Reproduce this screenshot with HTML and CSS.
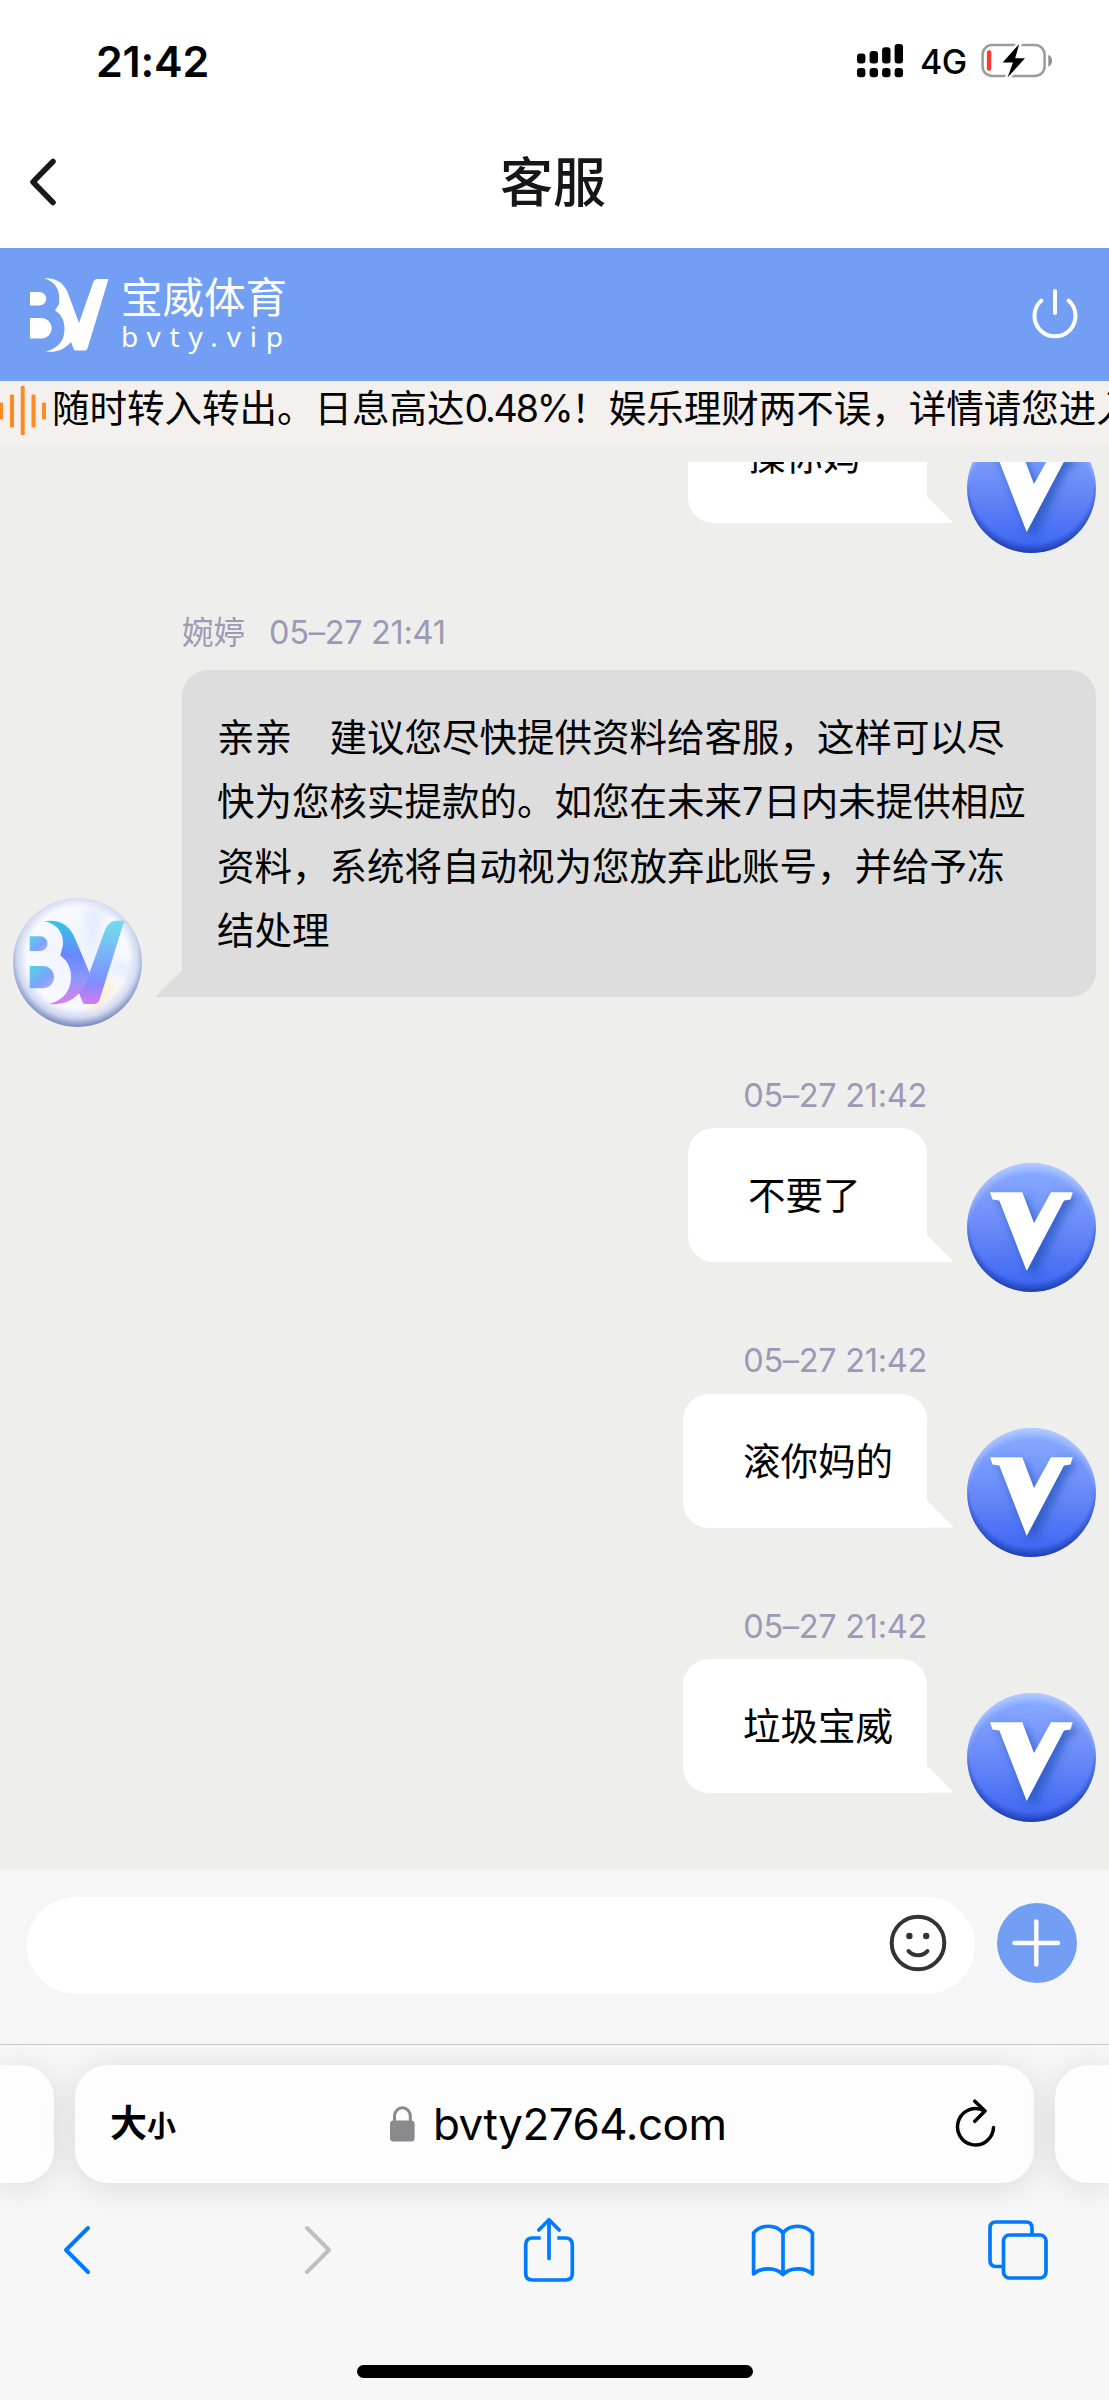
FILE: index.html
```
<!DOCTYPE html>
<html lang="zh-CN">
<head>
<meta charset="utf-8">
<title>客服</title>
<link rel="stylesheet" href="styles.css">
</head>
<body>
<svg class="defs" width="0" height="0" aria-hidden="true">
  <defs>
    <linearGradient id="vBall" x1="0" y1="0" x2="0" y2="1">
      <stop offset="0" stop-color="#8aaeff"/><stop offset=".25" stop-color="#7b9cfb"/>
      <stop offset=".55" stop-color="#6486f7"/><stop offset="1" stop-color="#3a63f3"/>
    </linearGradient>
    <radialGradient id="vRim" cx=".5" cy=".44" r=".56">
      <stop offset=".86" stop-color="#1b3aa8" stop-opacity="0"/><stop offset="1" stop-color="#1b3aa8" stop-opacity=".9"/>
    </radialGradient>
    <radialGradient id="vGlow" cx=".5" cy=".58" r=".58">
      <stop offset=".85" stop-color="#c4d6ff" stop-opacity="0"/><stop offset="1" stop-color="#c4d6ff" stop-opacity=".75"/>
    </radialGradient>
    <filter id="soft" x="-30%" y="-30%" width="160%" height="160%"><feGaussianBlur stdDeviation="4"/></filter>
    <symbol id="avatarV" viewBox="0 0 129 129">
      <circle cx="64.5" cy="64.5" r="64.4" fill="url(#vBall)"/>
      <circle cx="64.5" cy="64.5" r="64.4" fill="url(#vGlow)"/>
      <circle cx="64.5" cy="64.5" r="64.4" fill="url(#vRim)"/>
      <path d="M28 34H58L71 64 89 34H110L106 42 101 44 68 113 60 108 36 44Z" fill="#2557bd" opacity=".75" filter="url(#soft)"/>
      <path d="M23 29.3H55.3L67 60 84 29.3H105.7L103.5 36.5 97 37.5 59.7 108 32.3 37.5 25.5 36.5Z" fill="#fff"/>
    </symbol>
  </defs>
</svg>

<div class="phone">
  <div class="status">
    <span class="clock">21:42</span>
    <div class="status-icons">
      <svg class="signal" width="46" height="34" viewBox="0 0 46 34">
        <rect x="0" y="9.5" width="8.4" height="10" rx="3"/><rect x="12.6" y="7" width="8.4" height="12.5" rx="3"/>
        <rect x="25.1" y="3.3" width="8.4" height="16.2" rx="3"/><rect x="37.6" y="0" width="8.4" height="19.5" rx="3"/>
        <rect x="0" y="24" width="8.4" height="9.3" rx="3"/><rect x="12.6" y="24" width="8.4" height="9.3" rx="3"/>
        <rect x="25.1" y="24" width="8.4" height="9.3" rx="3"/><rect x="37.6" y="24" width="8.4" height="9.3" rx="3"/>
      </svg>
      <span class="net">4G</span>
      <svg class="battery" width="72" height="35" viewBox="0 0 72 35">
        <rect x="1.6" y="2" width="62" height="31" rx="9.5" fill="none" stroke="#9b9b9b" stroke-width="2.5"/>
        <path d="M67.3 12c5 1.500 5 10 0 11.500z" fill="#8d8d8d"/>
        <rect x="5.900" y="7.300" width="4.300" height="20.400" rx="1.800" fill="#ff3b30"/>
        <path d="M38.200 1L21.600 19.600H32L26.500 34.500 44 15.200H34.200Z" fill="#000" stroke="#fff" stroke-width="5" stroke-linejoin="round" paint-order="stroke"/>
      </svg>
    </div>
  </div>

  <div class="titlebar">
    <svg class="back" width="30" height="50" viewBox="0 0 30 50"><path d="M25 4.500L5 25 25 45.500" fill="none" stroke="#17171c" stroke-width="5.500" stroke-linecap="round" stroke-linejoin="round"/></svg>
    <h1>客服</h1>
    <span class="spacer"></span>
  </div>

  <header class="brandbar">
    <div class="brand">
      <svg width="81" height="76" viewBox="0 0 81 76" fill="#fff">
        <path d="M1 15H10.500a6.700 6.700 0 0 1 0 13.500H1zM1 41H12.500a10 10 0 0 1 0 20.500H1z"/>
        <path d="M15 1.300C26 .500 34 5 38.500 15L50 46 64.500 4.500Q65.500 2 68 2H79.500L58.500 71.500Q58 73.500 55.500 73.500H46Q45 73.500 44.700 72L42 65C36 72 28 76 17 74.500 30 71 35.500 63 35.500 52 35.500 43 32 37 26 33.500L30 27C31.500 15 28 5 15 1.300Z"/>
      </svg>
      <div class="brand-text"><span class="brand-cn">宝威体育</span><span class="brand-en">bvty.vip</span></div>
    </div>
    <svg class="power" width="50" height="52" viewBox="0 0 50 52" fill="none" stroke="#fff" stroke-width="4" stroke-linecap="round">
      <path d="M25 4V26M11.400 13.500a20.500 20.500 0 1 0 27.200 0"/>
    </svg>
  </header>

  <div class="notice">
    <svg width="46" height="50" viewBox="0 0 46 50" fill="#ff8a24">
      <rect x="-1" y="16.500" width="4" height="17" rx="1"/><rect x="10" y="8.500" width="4" height="33" rx="1"/><rect x="20.700" width="4" height="49" rx="1"/><rect x="31.500" y="8.500" width="4" height="33" rx="1"/><rect x="42" y="16.500" width="4" height="17" rx="1"/>
    </svg>
    <p>随时转入转出。日息高达<span class="rate">0.48%</span>！娱乐理财两不误，详情请您进入</p>
  </div>

  <main class="chat">
    <div class="scroll">
      <div class="msg mine first">
        <time>05–27 21:42</time>
        <div class="row"><div class="bubble">操你妈</div><svg class="avatar"><use href="#avatarV"/></svg></div>
      </div>

      <div class="msg theirs">
        <div class="meta"><span>婉婷</span><time>05–27 21:41</time></div>
        <div class="row">
          <svg class="avatar" viewBox="0 0 129 129">
            <defs>
              <linearGradient id="bvFill" x1="0" y1="22" x2="0" y2="106" gradientUnits="userSpaceOnUse">
                <stop offset="0" stop-color="#70e0ea"/><stop offset=".4" stop-color="#79b4f8"/><stop offset=".75" stop-color="#7f8cff"/><stop offset="1" stop-color="#d878f0"/>
              </linearGradient>
              <linearGradient id="bFill" x1="0" y1="22" x2="0" y2="106" gradientUnits="userSpaceOnUse">
                <stop offset="0" stop-color="#2ccbe2"/><stop offset=".42" stop-color="#6a86ff"/><stop offset=".7" stop-color="#8b98fb"/><stop offset="1" stop-color="#e07cf0"/>
              </linearGradient>
              <linearGradient id="holes" x1="0" y1="0" x2="1" y2="1"><stop offset="0" stop-color="#55d3ea"/><stop offset=".6" stop-color="#7ba4fa"/><stop offset="1" stop-color="#c9a6f6"/></linearGradient>
              <radialGradient id="pearl" cx=".5" cy=".46" r=".56">
                <stop offset="0" stop-color="#eef1ff"/><stop offset=".7" stop-color="#f8faff"/><stop offset=".84" stop-color="#cfd8f1"/><stop offset="1" stop-color="#5a6da8"/>
              </radialGradient>
            </defs>
            <circle cx="64.500" cy="64.500" r="64.400" fill="url(#pearl)"/>
            <path d="M78 60L70 8H96ZM78 60L122 66 118 84Z" fill="#dce4fd" opacity=".55" filter="url(#soft)"/>
            <path d="M92 80L106 88 80 116 76 108Z" fill="#ffeacb" opacity=".75" filter="url(#soft)"/>
            <path d="M16.700 38.300H28a7.400 7.400 0 0 1 0 14.700H16.700z" fill="url(#holes)"/>
            <path d="M16.700 68H31a11.200 11.200 0 0 1 0 22.300H16.700z" fill="url(#holes)"/>
            <path d="M31.700 23.300C45 21 55 26 61 38L77 76Q76 92 66 95.300C58 104 48 107 36 106 51 102 58 92 58 79 58 69 54 62 47.300 57.700L50 47C51 35 44 26 31.700 23.300Z" fill="url(#bFill)"/>
            <path d="M76.700 74L92 32Q96 22.700 103 22.700H111.300L86.500 102Q85 106 81 106H72Q70 106 69.500 104L66 95.300Q74 88 76.700 74Z" fill="url(#bvFill)"/>
          </svg>
          <div class="bubble">亲亲　建议您尽快提供资料给客服，这样可以尽<br>快为您核实提款的。如您在未来<span class="num">7</span>日内未提供相应<br>资料，系统将自动视为您放弃此账号，并给予冻<br>结处理</div>
        </div>
      </div>

      <div class="msg mine">
        <time>05–27 21:42</time>
        <div class="row"><div class="bubble">不要了</div><svg class="avatar"><use href="#avatarV"/></svg></div>
      </div>
      <div class="msg mine">
        <time>05–27 21:42</time>
        <div class="row"><div class="bubble">滚你妈的</div><svg class="avatar"><use href="#avatarV"/></svg></div>
      </div>
      <div class="msg mine">
        <time>05–27 21:42</time>
        <div class="row"><div class="bubble">垃圾宝威</div><svg class="avatar"><use href="#avatarV"/></svg></div>
      </div>
    </div>
  </main>

  <div class="composer">
    <div class="field">
      <svg width="58" height="58" viewBox="0 0 58 58" fill="none" stroke="#333" stroke-width="4" stroke-linecap="round">
        <circle cx="29" cy="29" r="26.300"/><path d="M19.500 37c4.500 5.600 14.500 5.600 19 0"/>
        <circle cx="20.400" cy="22" r="3.200" fill="#333" stroke="none"/><circle cx="37.200" cy="22" r="3.200" fill="#333" stroke="none"/>
      </svg>
    </div>
    <svg class="add" width="80" height="80" viewBox="0 0 80 80"><circle cx="40" cy="40" r="40" fill="#729ff4"/><path d="M39.300 18.500V61.500M17.500 40H61" stroke="#fff" stroke-width="4.400" stroke-linecap="round"/></svg>
  </div>

  <footer class="browser">
    <div class="tabs">
      <div class="card side"></div>
      <div class="card address">
        <span class="size"><b>大</b><i>小</i></span>
        <div class="host">
          <svg width="25" height="36" viewBox="0 0 25 36"><path d="M4.500 17V10.500a7.900 8.700 0 0 1 15.800 0V17" fill="none" stroke="#8a898e" stroke-width="3"/><rect y="14.500" width="24.600" height="21" rx="3.500" fill="#8a898e"/></svg>
          <span>bvty2764.com</span>
        </div>
        <svg class="reload" width="44" height="52" viewBox="0 0 44 52" fill="none" stroke="#000" stroke-width="3.500" stroke-linecap="round" stroke-linejoin="round">
          <path d="M39.500 29.500A18 18.200 0 1 1 30.500 13M20.800 3.200L31 13 20.800 23.300"/>
        </svg>
      </div>
      <div class="card side"></div>
    </div>
    <nav class="tools">
      <svg width="30" height="52" viewBox="0 0 30 52"><path d="M26 4L4 26 26 48" fill="none" stroke="#007aff" stroke-width="4" stroke-linecap="round" stroke-linejoin="round"/></svg>
      <svg width="30" height="52" viewBox="0 0 30 52"><path d="M4 4L26 26 4 48" fill="none" stroke="#bfbfbf" stroke-width="4" stroke-linecap="round" stroke-linejoin="round"/></svg>
      <svg class="share" width="52" height="66" viewBox="0 0 52 66" fill="none" stroke="#007aff" stroke-width="3.700" stroke-linejoin="round">
        <path d="M17.700 21H9.500Q2.700 21 2.700 28V56.500Q2.700 63 9.500 63H42.500Q49.300 63 49.300 56.500V28Q49.300 21 42.500 21H34.300"/><path d="M26 41.500V3M15.800 13L26 2.800 36.200 13" stroke-linecap="round"/>
      </svg>
      <svg width="64" height="56" viewBox="0 0 64 56" fill="none" stroke="#007aff" stroke-width="3.700" stroke-linejoin="round">
        <path d="M32 11C25 2 10 2 2.600 11V52C10 45 25 45 32 52.500 39 45 54 45 61.400 52V11C54 2 39 2 32 11ZV52"/>
      </svg>
      <svg width="62" height="62" viewBox="0 0 62 62" fill="none" stroke="#007aff" stroke-width="3.700">
        <path d="M15.800 47.500H9Q3 47.500 3 41.500V9Q3 3 9 3H39Q45 3 45 9V15.500"/><rect x="16.500" y="16" width="42.500" height="43" rx="6"/>
      </svg>
    </nav>
    <div class="home"></div>
  </footer>
</div>
</body>
</html>
```
FILE: styles.css
```
* { box-sizing: border-box; }
body { margin: 0; background: #fff; color: #000; font-family: Inter, "Noto Sans CJK SC", sans-serif; }
svg { display: block; flex: none; }
.defs { position: absolute; }
.phone { width: 1109px; height: 2400px; overflow: hidden; display: flex; flex-direction: column; }
.phone > * { flex: none; }

.status { height: 121px; padding: 0 56px 0 96px; display: flex; align-items: center; justify-content: space-between; }
.clock { font-size: 43px; font-weight: 600; letter-spacing: -.2px; }
.status-icons { display: flex; align-items: center; }
.net { margin: 2px 15px 0 17px; width: 46px; font-size: 34px; font-weight: 500; letter-spacing: -.5px; white-space: nowrap; }

.titlebar { height: 127px; padding: 0 31px 0 28px; display: flex; align-items: center; justify-content: space-between; }
.titlebar h1 { margin: -4px 0 0; font-size: 53px; font-weight: 500; line-height: 60px; color: #15151a; }
.back { margin-top: -6px; }
.spacer { width: 30px; }

.brandbar { height: 133px; padding: 0 29px; display: flex; align-items: center; justify-content: space-between; background: #729ff4; color: #fff; }
.brand { display: flex; align-items: center; gap: 11px; }
.brand-text { display: flex; flex-direction: column; }
.brand-cn { font-size: 41.500px; font-weight: 400; line-height: 42px; }
.brand-en { font-family: "Noto Sans", sans-serif; font-size: 28px; line-height: 34px; letter-spacing: 8.800px; }
.power { margin-top: -4px; }

.notice { height: 65px; display: flex; gap: 6px; background: #f4f0ee; overflow: hidden; }
.notice svg { margin-top: 5px; }
.notice p { margin: 0; font-size: 37.500px; line-height: 56px; white-space: nowrap; }
.rate { letter-spacing: -2.200px; }

.chat { height: 1424px; padding-top: 15.500px; background: #eeeeec; }
.scroll { height: 100%; overflow: hidden; }
.msg { padding-bottom: 36.600px; }
.msg.first { margin-top: -137.500px; }
.row { display: flex; align-items: flex-end; }
.avatar { width: 129px; height: 129px; }
time, .meta { color: #9d99b5; font-size: 32.500px; font-weight: 400; letter-spacing: -.3px; }
.bubble { position: relative; border-radius: 26px; font-size: 37.500px; }
.bubble::after { content: ""; position: absolute; bottom: 0; width: 27px; height: 27px; background: inherit; }

.mine time { display: block; height: 65.300px; line-height: 65.300px; padding-right: 182px; text-align: right; }
.mine .row { height: 163.400px; justify-content: flex-end; gap: 40px; padding-right: 13px; }
.mine .bubble { align-self: flex-start; min-width: 239px; height: 134px; padding: 0 34px 0 60px; line-height: 135px; background: #fff; border-bottom-right-radius: 0; }
.mine .bubble::after { left: 100%; clip-path: polygon(0 0, 100% 100%, 0 100%); }

.theirs { padding-top: 6px; padding-bottom: 36.300px; }
.meta { display: flex; gap: 24px; padding-left: 182px; height: 75px; line-height: 75px; }
.meta span { font-size: 31.500px; letter-spacing: 0; }
.theirs .row { height: 356.400px; padding: 0 13px; gap: 40px; }
.theirs .bubble { align-self: flex-start; flex: 1; height: 327px; padding: 36px 0 0 35px; line-height: 64.200px; white-space: nowrap; background: #ddd; border-bottom-left-radius: 0; }
.theirs .bubble::after { right: 100%; clip-path: polygon(100% 0, 100% 100%, 0 100%); }

.composer { height: 174px; padding: 27px 32px 0 27px; display: flex; justify-content: space-between; background: #f6f6f6; }
.field { width: 948px; height: 97px; padding: 17px 28px 0 0; display: flex; justify-content: flex-end; border-radius: 49px; background: #fff; }
.add { margin-top: 6px; }

.browser { height: 356px; border-top: 1px solid #c9c9cf; background: #f7f7f7; }
.tabs { display: flex; justify-content: space-between; padding-top: 20px; }
.card { height: 118px; background: #fdfdfd; border-radius: 33px; box-shadow: 0 4px 34px rgba(0, 0, 0, .12); }
.side { width: 54px; }
.side:first-child { border-radius: 0 33px 33px 0; }
.side:last-child { border-radius: 33px 0 0 33px; }
.address { width: 959px; padding: 0 36px 0 35px; display: flex; align-items: center; }
.size { display: flex; align-items: baseline; width: 70px; line-height: 60px; margin-top: 3px; }
.size b { font-size: 37px; font-weight: 600; }
.size i { font-size: 29px; font-style: normal; font-weight: 600; }
.host { display: flex; align-items: center; gap: 18px; margin-left: 210px; font-size: 44px; letter-spacing: -.5px; }
.reload { margin-left: auto; }
.tools { height: 137px; padding: 0 0 4px 62px; display: flex; align-items: center; }
.tools svg + svg { margin-left: 211px; }
.tools .share.share { margin-left: 190px; }
.tools .share + svg { margin-left: 176px; }
.tools .share + svg + svg { margin-left: 172px; }
.home { width: 396px; height: 13px; margin: 45px auto 0; border-radius: 7px; background: #000; }
```
